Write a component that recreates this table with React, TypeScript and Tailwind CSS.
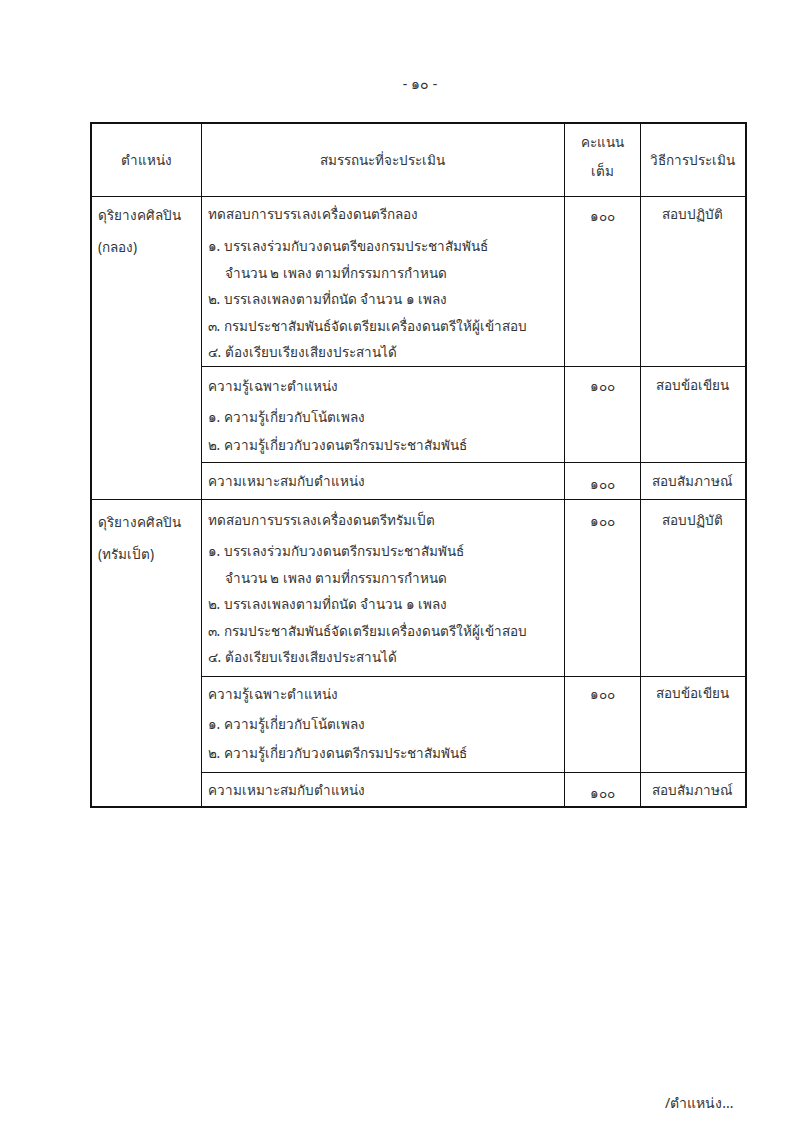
const FONT = "font-['Noto_Sans','DejaVu_Sans',sans-serif]";

type Line = { text: string; indent?: boolean; gapAfter?: boolean };

type Block = {
  lines: Line[];
  score: string;
  method: string;
  height: string;
  pad: string;
  lead: string;
  gap: string;
  scorePad: string;
  methodPad: string;
};

const practice = (instrument: string, first: string): Line[] => [
  { text: `ทดสอบการบรรเลงเครื่องดนตรี${instrument}`, gapAfter: true },
  { text: first },
  { text: "จำนวน ๒ เพลง ตามที่กรรมการกำหนด", indent: true },
  { text: "๒. บรรเลงเพลงตามที่ถนัด จำนวน ๑ เพลง" },
  { text: "๓. กรมประชาสัมพันธ์จัดเตรียมเครื่องดนตรีให้ผู้เข้าสอบ" },
  { text: "๔. ต้องเรียบเรียงเสียงประสานได้" },
];

const knowledge: Line[] = [
  { text: "ความรู้เฉพาะตำแหน่ง", gapAfter: true },
  { text: "๑. ความรู้เกี่ยวกับโน้ตเพลง" },
  { text: "๒. ความรู้เกี่ยวกับวงดนตรีกรมประชาสัมพันธ์" },
];

const fit: Line[] = [{ text: "ความเหมาะสมกับตำแหน่ง" }];

const positions: { name: [string, string]; pad: string; blocks: Block[] }[] = [
  {
    name: ["ดุริยางคศิลปิน", "(กลอง)"],
    pad: "pt-[2px]",
    blocks: [
      {
        lines: practice("กลอง", "๑. บรรเลงร่วมกับวงดนตรีของกรมประชาสัมพันธ์"),
        score: "๑๐๐",
        method: "สอบปฏิบัติ",
        height: "h-[170px]",
        pad: "pt-[4px]",
        lead: "leading-[26.5px]",
        gap: "mb-[6px]",
        scorePad: "pt-[6px]",
        methodPad: "pt-[4px]",
      },
      {
        lines: knowledge,
        score: "๑๐๐",
        method: "สอบข้อเขียน",
        height: "h-[96px]",
        pad: "pt-[5px]",
        lead: "leading-[28px]",
        gap: "mb-[3px]",
        scorePad: "pt-[6px]",
        methodPad: "pt-[5px]",
      },
      {
        lines: fit,
        score: "๑๐๐",
        method: "สอบสัมภาษณ์",
        height: "h-[37px]",
        pad: "pt-[5px]",
        lead: "leading-[26px]",
        gap: "",
        scorePad: "pt-[8px]",
        methodPad: "pt-[5px]",
      },
    ],
  },
  {
    name: ["ดุริยางคศิลปิน", "(ทรัมเป็ต)"],
    pad: "pt-[6px]",
    blocks: [
      {
        lines: practice("ทรัมเป็ต", "๑. บรรเลงร่วมกับวงดนตรีกรมประชาสัมพันธ์"),
        score: "๑๐๐",
        method: "สอบปฏิบัติ",
        height: "h-[177px]",
        pad: "pt-[7px]",
        lead: "leading-[26.5px]",
        gap: "mb-[5px]",
        scorePad: "pt-[8px]",
        methodPad: "pt-[7px]",
      },
      {
        lines: knowledge,
        score: "๑๐๐",
        method: "สอบข้อเขียน",
        height: "h-[96px]",
        pad: "pt-[3px]",
        lead: "leading-[29px]",
        gap: "mb-[1px]",
        scorePad: "pt-[4px]",
        methodPad: "pt-[3px]",
      },
      {
        lines: fit,
        score: "๑๐๐",
        method: "สอบสัมภาษณ์",
        height: "h-[35px]",
        pad: "pt-[4px]",
        lead: "leading-[26px]",
        gap: "",
        scorePad: "pt-[7px]",
        methodPad: "pt-[4px]",
      },
    ],
  },
];

const cell = "border border-[#111]";

export default function App() {
  return (
    <div className={`relative h-[1132px] w-[800px] bg-white text-[13.5px] text-[#333] ${FONT}`}>
      <div className="pt-[72px] pl-[40px] text-center text-[14px] leading-6">- ๑๐ -</div>

      <table className="ml-[90px] mt-[26px] w-[655px] table-fixed border-collapse border-2 border-[#111]">
        <colgroup>
          <col className="w-[110px]" />
          <col className="w-[363px]" />
          <col className="w-[76px]" />
          <col className="w-[106px]" />
        </colgroup>
        <thead>
          <tr className="h-[73px]">
            <th className={`${cell} align-middle font-normal`}>ตำแหน่ง</th>
            <th className={`${cell} align-middle font-normal`}>สมรรถนะที่จะประเมิน</th>
            <th className={`${cell} align-middle pb-[6px] font-normal leading-[29px]`}>
              คะแนน
              <br />
              เต็ม
            </th>
            <th className={`${cell} align-middle font-normal`}>วิธีการประเมิน</th>
          </tr>
        </thead>
        <tbody>
          {positions.map((p) =>
            p.blocks.map((b, i) => (
              <tr key={`${p.name[1]}-${i}`} className={b.height}>
                {i === 0 && (
                  <td rowSpan={3} className={`${cell} align-top px-[6px] ${p.pad} leading-[32px]`}>
                    {p.name[0]}
                    <br />
                    {p.name[1]}
                  </td>
                )}
                <td className={`${cell} align-top px-[6px] ${b.pad}`}>
                  {b.lines.map((l, j) => (
                    <div
                      key={j}
                      className={`whitespace-nowrap ${b.lead} ${l.indent ? "pl-[17px]" : ""} ${l.gapAfter ? b.gap : ""}`}
                    >
                      {l.text}
                    </div>
                  ))}
                </td>
                <td className={`${cell} align-top ${b.scorePad} text-center leading-[26px]`}>{b.score}</td>
                <td className={`${cell} align-top ${b.methodPad} text-center leading-[26px]`}>{b.method}</td>
              </tr>
            ))
          )}
        </tbody>
      </table>

      <div className="absolute left-[665px] top-[1091px] text-[14px] leading-6">/ตำแหน่ง...</div>
    </div>
  );
}
